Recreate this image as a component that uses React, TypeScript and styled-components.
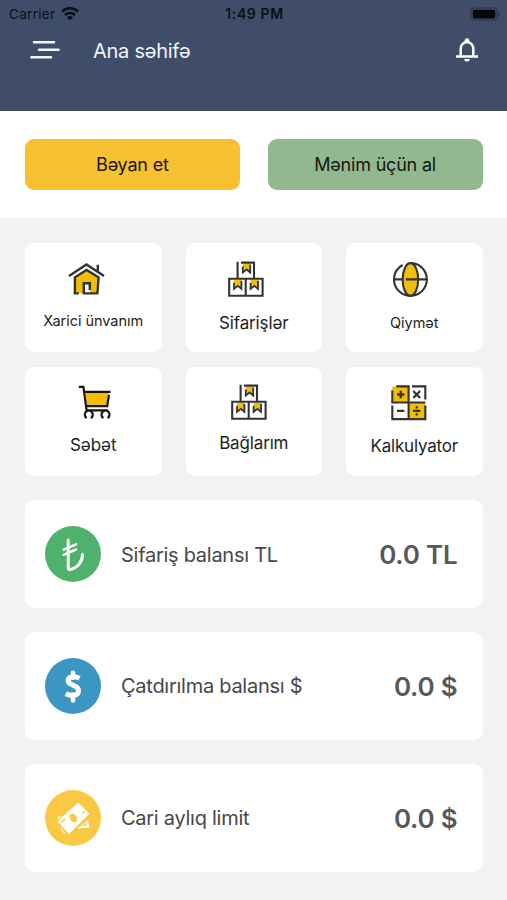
import React from "react";
import styled, { createGlobalStyle } from "styled-components";

const GlobalStyle = createGlobalStyle`
  *, *::before, *::after { box-sizing: border-box; }
  body { margin: 0; background: #f2f2f2; font-family: Inter, Roboto, sans-serif; }
  button { font: inherit; border: 0; padding: 0; margin: 0; color: inherit; cursor: pointer; }
`;

const Screen = styled.div`
  width: 100%;
  max-width: 507px;
  height: 900px;
  overflow: hidden;
  background: #f2f2f2;
`;

const Header = styled.header`
  height: 110.6px;
  background: #3f4d69;
`;

const StatusBar = styled.div`
  display: grid;
  grid-template-columns: 1fr auto 1fr;
  align-items: center;
  height: 27px;
  padding: 0 7px 0 9px;
  color: #0b0f18;
`;

const Carrier = styled.div`
  display: flex;
  align-items: center;
  gap: 6px;
  font-size: 13.5px;
  letter-spacing: 0.3px;
`;

const Time = styled.div`
  font-size: 14px;
  font-weight: 600;
  letter-spacing: 0.6px;
`;

const Battery = styled.svg`
  justify-self: end;
`;

const NavBar = styled.div`
  display: flex;
  align-items: center;
  height: 46px;
  padding: 0 28px 0 29px;
`;

const IconButton = styled.button`
  display: flex;
  background: none;
`;

const Title = styled.h1`
  flex: 1;
  margin: 1px 0 0 32px;
  font-size: 20px;
  font-weight: 400;
  line-height: 24px;
  letter-spacing: -0.25px;
  color: #f1f5fb;
`;

const Actions = styled.section`
  display: grid;
  grid-template-columns: 1fr 1fr;
  gap: 28px;
  height: 107.4px;
  padding: 28.4px 24.5px 28px 25px;
  background: #fff;
`;

const ActionButton = styled.button<{ $color: string }>`
  height: 51px;
  border-radius: 9px;
  background: ${(p) => p.$color};
  color: #14170f;
  font-size: 18px;
  letter-spacing: -0.2px;
`;

const Tiles = styled.section`
  display: grid;
  grid-template-columns: repeat(3, 1fr);
  grid-auto-rows: 109px;
  gap: 15px 24px;
  padding: 24.8px 24.5px 0 25px;
`;

const Tile = styled.button<{ $top: number; $left: number }>`
  display: flex;
  flex-direction: column;
  align-items: stretch;
  justify-content: flex-start;
  padding-top: ${(p) => p.$top}px;
  border-radius: 9px;
  background: #fff;

  svg {
    flex: none;
    margin-left: ${(p) => p.$left}px;
  }
`;

const TileLabel = styled.span<{ $size: number; $gap: number; $spacing: number }>`
  margin-top: ${(p) => p.$gap}px;
  font-size: ${(p) => p.$size}px;
  line-height: 20px;
  letter-spacing: ${(p) => p.$spacing}px;
  text-align: center;
  white-space: nowrap;
  color: #1e1e1e;
`;

const Balances = styled.section`
  display: flex;
  flex-direction: column;
  gap: 24.3px;
  padding: 24.5px 24.5px 0 25px;
`;

const BalanceCard = styled.article`
  display: flex;
  align-items: center;
  height: 107.6px;
  padding: 0 25px 0 20px;
  border-radius: 9px;
  background: #fff;
`;

const Badge = styled.div<{ $color: string }>`
  display: flex;
  flex: none;
  width: 56px;
  height: 56px;
  border-radius: 50%;
  background: ${(p) => p.$color};
`;

const BalanceName = styled.span`
  flex: 1;
  margin: 1px 0 0 20px;
  font-size: 20px;
  letter-spacing: -0.27px;
  white-space: nowrap;
  color: #47474a;
`;

const Amount = styled.strong`
  margin-top: 1px;
  font-size: 26px;
  font-weight: 600;
  letter-spacing: -0.2px;
  color: #58585a;
`;

const INK = "#333333";
const GOLD = "#f2bd05";

const WifiIcon = () => (
  <svg width="18" height="14" viewBox="0 0 18 14" fill="none" stroke="#0b0f18" strokeWidth="2.5">
    <path d="M1 4.6a11.4 11.4 0 0 1 16 0" />
    <path d="M4 8a7.1 7.1 0 0 1 10 0" />
    <path d="M9 13.3 6 10.4a4.3 4.3 0 0 1 6 0z" fill="#0b0f18" stroke="none" />
  </svg>
);

const BatteryIcon = () => (
  <Battery width="30" height="14" viewBox="0 0 30 14">
    <rect x="1" y="1" width="26.3" height="12" rx="3.5" fill="none" stroke="#2b344b" strokeWidth="1.2" />
    <rect x="2.8" y="2.7" width="22.5" height="8.8" rx="1.8" fill="#05070b" />
    <path d="M28.4 5v4.2q1.4-.7 1.4-2.1T28.4 5z" fill="#2b344b" />
  </Battery>
);

const MenuIcon = () => (
  <svg width="32" height="20" viewBox="0 0 32 20" stroke="#f2f6fb" strokeWidth="2.5" strokeLinecap="round">
    <path d="M5 2.3h20M10 9.7h19.6M2.4 17.2h19.6" />
  </svg>
);

const BellIcon = () => (
  <svg width="24" height="26" viewBox="0 0 24 26">
    <path
      d="M5.7 19.6v-7.8a6.3 6.8 0 0 1 12.6 0v7.8M1 19.6h22"
      fill="none"
      stroke="#fff"
      strokeWidth="2.5"
    />
    <circle cx="12" cy="3.6" r="2.3" fill="#fff" />
    <path d="M9.3 22h5.4a2.7 2.5 0 0 1-5.4 0z" fill="#fff" />
  </svg>
);

const HouseIcon = () => (
  <svg width="38" height="36" viewBox="0 0 38 36" fill="none" stroke={INK} strokeWidth="2.4">
    <path d="M7 15 18.7 7.3 31 15l-1.3 16.2H22V22h-6.6v9.2H7.3z" fill={GOLD} stroke="none" />
    <path d="M1 14 18.5 2.5 36 14M29.8 2.8v6.4" />
    <path d="M10.8 31.4H6.9V15.3L18.6 7.9l12 7.4L29.4 31.4H15.8V21.3h6V28" />
  </svg>
);

const Flag = ({ x, y }: { x: number; y: number }) => (
  <g transform={`translate(${x} ${y})`}>
    <path d="M0 0h7v7.6L3.7 5 .5 7.6z" fill={GOLD} stroke="none" />
    <path d="M0 3v6l3.8-3L7.4 9V1" strokeWidth="1.8" />
  </g>
);

const BoxesIcon = () => (
  <svg width="36" height="37" viewBox="0 0 36 37" fill="none" stroke={INK} strokeWidth="2.1">
    <Flag x={14.8} y={2.5} />
    <Flag x={6} y={18.8} />
    <Flag x={22.6} y={18.8} />
    <path d="M9.6 .8v17M13 1.6h13v16" />
    <path d="M1.2 17.7h33.4v17H1.2zM17.7 17.7v17" />
  </svg>
);

const GlobeIcon = () => (
  <svg width="36" height="36" viewBox="0 0 36 36" fill="none" stroke={INK} strokeWidth="2.1">
    <ellipse cx="17.4" cy="17.4" rx="7.8" ry="16.3" fill={GOLD} />
    <path d="M9.6 3A16.4 16.4 0 1 0 17.4 1M17.4 1A16.4 16.4 0 0 1 33.8 17.4" />
    <path d="M1 17.4h8.3M12.8 17.4H34" />
  </svg>
);

const CartIcon = () => (
  <svg width="36" height="36" viewBox="0 0 36 36" fill="none" stroke="#151515" strokeWidth="2.2">
    <path d="M7.5 7.2h23.7L29 21.2H9z" fill={GOLD} stroke="none" />
    <path d="M.8 1.8h4.6l3.2 23.6H30M6.4 6.8h26.1M31 10l-1.8 11.2H8.5" />
    <path d="M8.7 33a4 4 0 1 1 4.2 0M25.4 33a4 4 0 1 1 4.2 0" strokeDasharray="9.6 1 20" />
  </svg>
);

const CalculatorIcon = () => (
  <svg width="36" height="36" viewBox="0 0 36 36" fill="none" stroke={INK} strokeWidth="2.1">
    <path d="M1.2 1.7h16.4v16.2H1.2zM17.8 17.8h16.6v16H17.8z" fill={GOLD} stroke="none" />
    <path d="M5.2 1.4h12.4v33M1.3 5.4v12.1h33M21 1.4h13.3v13M34.3 20.5v13.6H1.3V20.5" />
    <path d="M6 9.5h7.4M9.7 5.8v7.4M6 25.8h7.4M22 25.8h7.4M22.3 6l6.8 7M29.1 6l-6.8 7" strokeWidth="2.3" />
    <path d="M25.7 21.2v2.2M25.7 28.2v2.2" />
  </svg>
);

const LiraIcon = () => (
  <svg width="56" height="56" viewBox="0 0 56 56" fill="none" stroke="#fff" strokeWidth="3" strokeLinecap="round" strokeLinejoin="round">
    <path d="M23.2 14v27.8c0 2 .8 2 2.6 1.6 6.4-1.3 11.5-7.1 11.8-15" />
    <path d="M18.6 23.6 31 18.3M18.6 28.8 31 23.5" strokeWidth="2.5" />
  </svg>
);

const DollarIcon = () => (
  <svg width="56" height="56" viewBox="0 0 56 56" fill="none" stroke="#fff">
    <path
      d="M34.5 20.4c-3.2-1.7-6.4-2-8.6-1.3-3.5 1.1-3.6 5.1-.4 6.8l5.1 2.6c4.1 2.1 3.7 7.3-.3 8.5-2.9.8-6.5.2-9.6-1.3"
      strokeWidth="5"
    />
    <path d="M28 14.8v5M28 36.5V42.5" strokeWidth="4.6" strokeLinecap="round" />
  </svg>
);

const CashIcon = () => (
  <svg width="56" height="56" viewBox="0 0 56 56">
    <path d="m43.2 30 1.2 7.2-12.2 1.6z" fill="#fff" />
    <path d="m36.2 36.4 5-3.6.4 2.8z" fill="#fac943" />
    <path d="M12.4 31.2 33.2 12.4 44.4 23.8 24 44z" fill="#fff" />
    <ellipse cx="28.4" cy="28" rx="3.5" ry="4.7" transform="rotate(-35 28.4 28)" fill="#fac943" />
    <path d="m16.3 32.3 4-3.2M37 23.8l3-2.4" stroke="#fac943" strokeWidth="1.4" />
    <path d="m12.4 28.6 3-2.3M16 38.8l3.6 4.6" stroke="#fff" strokeWidth="1.2" />
  </svg>
);

type TileData = {
  label: string;
  icon: React.ReactNode;
  top: number;
  left: number;
  gap: number;
  size: number;
  spacing: number;
};

const tiles: TileData[] = [
  { label: "Xarici ünvanım", icon: <HouseIcon />, top: 19, left: 43, gap: 13.5, size: 14.5, spacing: -0.03 },
  { label: "Sifarişlər", icon: <BoxesIcon />, top: 18.3, left: 42, gap: 15, size: 17, spacing: -0.12 },
  { label: "Qiymət", icon: <GlobeIcon />, top: 19, left: 47, gap: 14.8, size: 14.5, spacing: 0 },
  { label: "Səbət", icon: <CartIcon />, top: 18.2, left: 53, gap: 14.5, size: 17, spacing: -0.05 },
  { label: "Bağlarım", icon: <BoxesIcon />, top: 17.3, left: 45, gap: 11.9, size: 17, spacing: -0.15 },
  { label: "Kalkulyator", icon: <CalculatorIcon />, top: 18.3, left: 45, gap: 14.8, size: 17, spacing: -0.2 },
];

const balances = [
  { name: "Sifariş balansı TL", amount: "0.0 TL", color: "#4fb26c", icon: <LiraIcon /> },
  { name: "Çatdırılma balansı $", amount: "0.0 $", color: "#3c96c4", icon: <DollarIcon /> },
  { name: "Cari aylıq limit", amount: "0.0 $", color: "#fac943", icon: <CashIcon /> },
];

export default function App() {
  return (
    <>
      <GlobalStyle />
      <Screen>
        <Header>
          <StatusBar>
            <Carrier>
              Carrier
              <WifiIcon />
            </Carrier>
            <Time>1:49 PM</Time>
            <BatteryIcon />
          </StatusBar>
          <NavBar>
            <IconButton aria-label="Menyu">
              <MenuIcon />
            </IconButton>
            <Title>Ana səhifə</Title>
            <IconButton aria-label="Bildirişlər">
              <BellIcon />
            </IconButton>
          </NavBar>
        </Header>
        <Actions>
          <ActionButton $color="#f9c031">Bəyan et</ActionButton>
          <ActionButton $color="#92b890">Mənim üçün al</ActionButton>
        </Actions>
        <Tiles>
          {tiles.map((t) => (
            <Tile key={t.label} $top={t.top} $left={t.left}>
              {t.icon}
              <TileLabel $size={t.size} $gap={t.gap} $spacing={t.spacing}>
                {t.label}
              </TileLabel>
            </Tile>
          ))}
        </Tiles>
        <Balances>
          {balances.map((b) => (
            <BalanceCard key={b.name}>
              <Badge $color={b.color}>{b.icon}</Badge>
              <BalanceName>{b.name}</BalanceName>
              <Amount>{b.amount}</Amount>
            </BalanceCard>
          ))}
        </Balances>
      </Screen>
    </>
  );
}
